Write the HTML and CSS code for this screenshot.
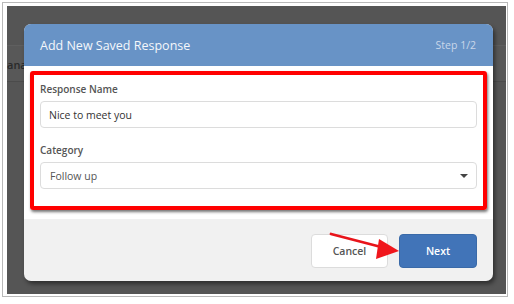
FILE: index.html
```html
<!DOCTYPE html>
<html lang="en">
  <head>
    <meta charset="UTF-8">
    <title>Add New Saved Response</title>
    <link rel="stylesheet" href="styles.css">
  </head>
  <body>
    <div class="frame">
      <div class="backdrop">
        <div class="behind">
          <span class="behind-text">ana</span>
        </div>
        <div class="modal">
          <div class="modal-head">
            <span class="modal-title">Add New Saved Response</span>
            <span class="modal-step">Step 1/2</span>
          </div>
          <div class="modal-body">
            <div class="highlight">
              <label class="field-label">Response Name</label>
              <div class="field-input">Nice to meet you</div>
              <label class="field-label second">Category</label>
              <div class="field-input select">
                <span>Follow up</span>
                <span class="caret"></span>
              </div>
            </div>
          </div>
          <div class="modal-foot">
            <button class="btn cancel">Cancel</button>
            <button class="btn next">Next</button>
          </div>
          <svg class="arrow" width="80" height="30" viewBox="0 0 80 30">
            <line x1="2" y1="2" x2="56" y2="16" stroke="#e8141a" stroke-width="2.8" stroke-linecap="round"/>
            <polygon points="70,19 50,7 47,27" fill="#f0161c"/>
          </svg>
        </div>
      </div>
    </div>
  </body>
</html>
```

FILE: styles.css
```css
body {
  margin: 0;
  background: #fff;
  font-family: "Open Sans", "Liberation Sans", sans-serif;
}
.frame {
  margin: 2px;
  width: 506px;
  height: 295px;
  border: 1px solid #b9b9b9;
  padding: 3px 1px 2px 4px;
  box-sizing: border-box;
  background: #fff;
}
.backdrop {
  position: relative;
  height: 288px;
  background: #555;
  padding: 18px 13px 0 17px;
  box-sizing: border-box;
}
.behind {
  position: absolute;
  left: 0;
  top: 39px;
  width: 100%;
  height: 35px;
  border-top: 1px solid #5f5f5f;
  border-bottom: 1px solid #4b4b4b;
  background: #585858;
}
.behind-text {
  position: absolute;
  left: 0;
  top: 11px;
  font-size: 11px;
  color: #2a2a2a;
  font-weight: 600;
}
.modal {
  position: relative;
  width: 469px;
  height: 257px;
  border-radius: 7px;
  box-shadow: 2px 3px 4px rgba(0, 0, 0, 0.45);
  background: #f1f1f1;
}
.modal-head {
  height: 42px;
  background: #6893c6;
  border-radius: 7px 7px 0 0;
  display: flex;
  align-items: center;
  justify-content: space-between;
  padding: 0 17px 0 16px;
  box-sizing: border-box;
}
.modal-title {
  color: #f4f7fb;
  font-size: 12.5px;
}
.modal-step {
  color: #c9d7ea;
  font-size: 10.5px;
}
.modal-body {
  background: #fff;
  height: 153px;
  padding: 5px 6px 0;
  box-sizing: border-box;
}
.highlight {
  height: 139px;
  border: 4px solid #ff0000;
  border-radius: 3px;
  padding: 7px 6px 0;
  box-sizing: border-box;
  box-shadow: 1px 2px 3px rgba(0, 0, 0, 0.55);
  display: flex;
  flex-direction: column;
}
.field-label {
  font-size: 10px;
  font-weight: 600;
  color: #555;
  line-height: 15px;
  margin-bottom: 4px;
}
.field-label.second {
  margin-top: 15px;
}
.field-input {
  height: 27px;
  border: 1px solid #dcdcdc;
  border-radius: 4px;
  box-sizing: border-box;
  padding: 0 8px;
  font-size: 10.5px;
  color: #333;
  display: flex;
  align-items: center;
}
.field-input.select {
  justify-content: space-between;
  color: #555;
  padding-left: 9px;
}
.caret {
  width: 0;
  height: 0;
  border-left: 4px solid transparent;
  border-right: 4px solid transparent;
  border-top: 4px solid #444;
}
.modal-foot {
  display: flex;
  justify-content: flex-end;
  gap: 11px;
  padding: 15px 16px 0 0;
}
.btn {
  height: 34px;
  border-radius: 4px;
  font-family: "Open Sans", "Liberation Sans", sans-serif;
  font-size: 10.5px;
  font-weight: 600;
}
.cancel {
  width: 77px;
  background: #fff;
  border: 1px solid #dcdcdc;
  color: #555;
}
.next {
  width: 78px;
  background: #4174b8;
  border: 1px solid #3a6aa8;
  color: #fff;
}
.arrow {
  position: absolute;
  left: 305px;
  top: 208px;
}
```
